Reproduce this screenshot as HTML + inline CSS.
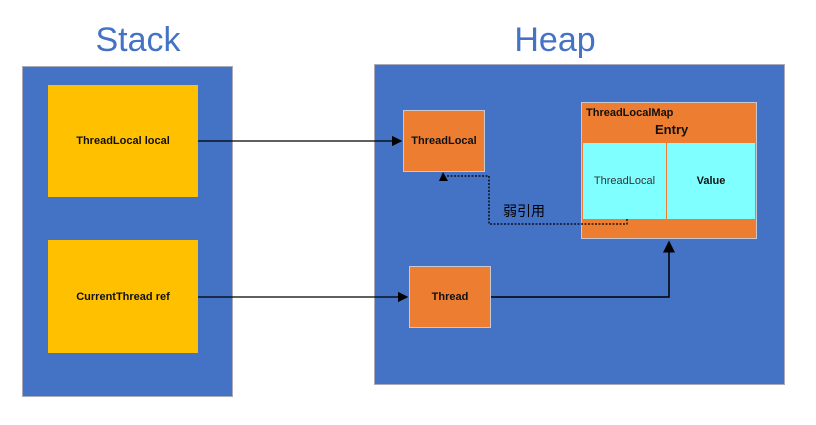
<!DOCTYPE html>
<html><head><style>
body{margin:0;width:816px;height:425px;background:#fff;position:relative;overflow:hidden;font-family:"Liberation Sans","Noto Sans CJK SC",sans-serif}
div{position:absolute;box-sizing:border-box}
.t{font-size:34px;color:#4472c4;text-align:center}
.o{background:#ed7d31;border:1px solid #c8c8d0;display:flex;align-items:center;justify-content:center;font-size:11px;font-weight:bold;color:#111}
.y{background:#ffc000;display:flex;align-items:center;justify-content:center;font-size:11px;font-weight:bold;color:#111}
</style></head><body>
<div class="t" style="left:58px;top:21px;width:160px">Stack</div>
<div class="t" style="left:475px;top:21px;width:160px">Heap</div>
<div style="left:22px;top:66px;width:211px;height:331px;background:#4472c4;border:1px solid #aab"></div>
<div class="y" style="left:48px;top:85px;width:150px;height:112px">ThreadLocal local</div>
<div class="y" style="left:48px;top:240px;width:150px;height:113px">CurrentThread ref</div>
<div style="left:374px;top:64px;width:411px;height:321px;background:#4472c4;border:1px solid #aab"></div>
<div class="o" style="left:403px;top:110px;width:82px;height:62px">ThreadLocal</div>
<div class="o" style="left:409px;top:266px;width:82px;height:62px">Thread</div>
<div style="left:581px;top:102px;width:176px;height:137px;background:#ed7d31;border:1px solid #c8c8d0"></div>
<div style="left:586px;top:107px;font-size:11px;font-weight:bold;color:#111">ThreadLocalMap</div>
<div style="left:655px;top:122px;font-size:13px;font-weight:bold;color:#111">Entry</div>
<div style="left:583px;top:143px;width:83px;height:76px;background:#7fffff;display:flex;align-items:center;justify-content:center;font-size:11px;color:#333">ThreadLocal</div>
<div style="left:667px;top:143px;width:88px;height:76px;background:#7fffff;display:flex;align-items:center;justify-content:center;font-size:11px;font-weight:bold;color:#111">Value</div>
<div style="left:503px;top:201px;font-size:14px;color:#000">弱引用</div>
<svg width="816" height="425" style="position:absolute;left:0;top:0">
<defs><marker id="a" markerWidth="8" markerHeight="8" refX="7" refY="4" orient="auto"><path d="M0,0L8,4L0,8z" fill="#000"/></marker></defs>
<path d="M198,141H401" stroke="#000" stroke-width="1.3" fill="none" marker-end="url(#a)"/>
<path d="M198,297H407" stroke="#000" stroke-width="1.3" fill="none" marker-end="url(#a)"/>
<path d="M491,297H669V242" stroke="#000" stroke-width="1.5" fill="none" marker-end="url(#a)"/>
<path d="M627,219V224H489V176H447" stroke="#000" stroke-width="1.3" stroke-dasharray="2,1.5" fill="none"/>
<path d="M443,172L439,181H448z" fill="#000"/>
</svg>
</body></html>
